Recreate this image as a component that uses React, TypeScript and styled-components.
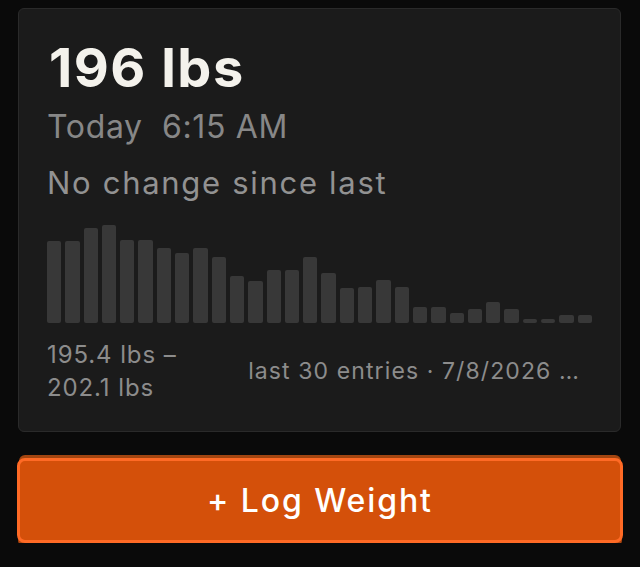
import styled, { createGlobalStyle } from "styled-components"

const heights = [
  82, 82, 95, 98, 83, 83, 75, 70, 75, 66,
  47, 42, 53, 53, 66, 50, 35, 36, 43, 36,
  16, 16, 10, 14, 21, 14, 4, 4, 8, 8,
]

const App = () => {
  return (
    <>
      <Global />
      <Page>
        <Card>
          <Weight>196 lbs</Weight>
          <When>Today&nbsp; 6:15 AM</When>
          <Status>No change since last</Status>
          <Chart>
            {heights.map((h, i) => (
              <Bar key={i} style={{ height: h }} />
            ))}
          </Chart>
          <Footer>
            <Range>
              195.4 lbs –<br />
              202.1 lbs
            </Range>
            <Entries>last 30 entries · 7/8/2026 …</Entries>
          </Footer>
        </Card>
        <LogButton>+ Log Weight</LogButton>
      </Page>
    </>
  )
}

export default App

const Global = createGlobalStyle`
body{
  margin: 0;
  background-color: #0a0a0a;
  font-family: Inter, "Liberation Sans", sans-serif;
}
`

const Page = styled.div`
display: flex;
flex-direction: column;
padding: 8px 19px 0 18px;
`

const Card = styled.div`
background-color: #1b1b1b;
border: 1px solid #2a2a2a;
border-radius: 6px;
padding: 29px 28px 27px 28px;
display: flex;
flex-direction: column;
`

const Weight = styled.div`
font-size: 54px;
line-height: 60px;
font-weight: 700;
color: #f4f2ec;
letter-spacing: 1.5px;
margin-left: 2px;
`

const When = styled.div`
margin-top: 9px;
font-size: 32px;
line-height: 40px;
color: #878787;
letter-spacing: 0.65px;
`

const Status = styled.div`
margin-top: 16px;
font-size: 31px;
line-height: 40px;
color: #929292;
letter-spacing: 1.7px;
`

const Chart = styled.div`
margin-top: 22px;
height: 98px;
display: flex;
align-items: flex-end;
gap: 4px;
`

const Bar = styled.div`
flex: 1;
background-color: #383838;
border-radius: 2px;
`

const Footer = styled.div`
margin-top: 15px;
display: flex;
align-items: center;
justify-content: space-between;
`

const Range = styled.div`
font-size: 24px;
line-height: 33px;
color: #8c8c8c;
letter-spacing: 0.9px;
`

const Entries = styled.div`
font-size: 23px;
line-height: 33px;
color: #8c8c8c;
letter-spacing: 1.1px;
padding-right: 12px;
white-space: nowrap;
`

const LogButton = styled.button`
margin: 26px -2px 0 -1px;
height: 85px;
background-color: #d4500a;
border: 3px solid #ff6a25;
border-radius: 8px;
box-shadow: 0 5px 0 -1px #b0460f, 0 -5px 0 -2px #a24510;
color: #ffffff;
font-family: Inter, "Liberation Sans", sans-serif;
font-size: 32px;
font-weight: 500;
letter-spacing: 1.9px;
display: flex;
align-items: center;
justify-content: center;
cursor: pointer;
`
